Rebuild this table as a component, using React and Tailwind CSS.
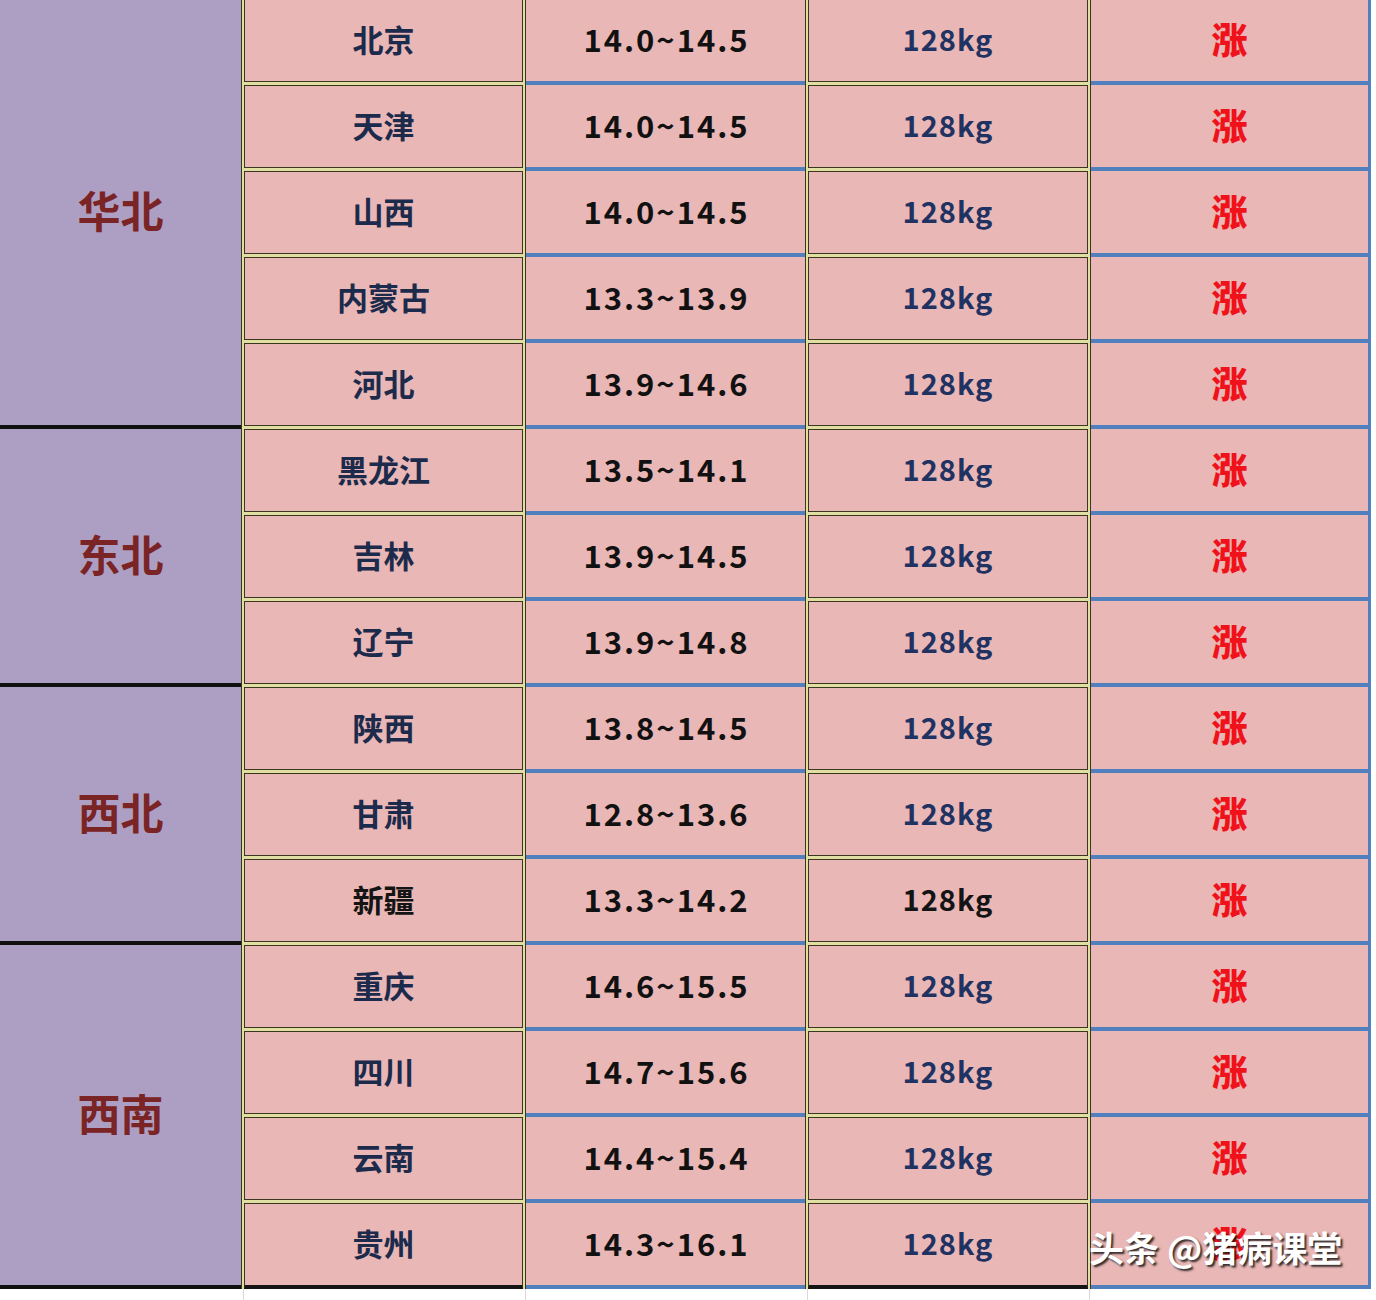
const regions = [
  { name: "华北", h: "h-[430px]" },
  { name: "东北", h: "h-[258px]" },
  { name: "西北", h: "h-[258px]" },
  { name: "西南", h: "h-[344px]" },
];

const rows = [
  ["北京", "14.0~14.5"],
  ["天津", "14.0~14.5"],
  ["山西", "14.0~14.5"],
  ["内蒙古", "13.3~13.9"],
  ["河北", "13.9~14.6"],
  ["黑龙江", "13.5~14.1"],
  ["吉林", "13.9~14.5"],
  ["辽宁", "13.9~14.8"],
  ["陕西", "13.8~14.5"],
  ["甘肃", "12.8~13.6"],
  ["新疆", "13.3~14.2"],
  ["重庆", "14.6~15.5"],
  ["四川", "14.7~15.6"],
  ["云南", "14.4~15.4"],
  ["贵州", "14.3~16.1"],
];

const Framed = ({ last, children, className }) => (
  <div
    className={`shrink-0 border-x border-[#3b3620] bg-[#e0dea0] px-[2px] ${
      last ? "pb-0" : "pb-[3px]"
    } ${className}`}
  >
    <div
      className={`flex h-full items-center justify-center border border-[#3b3620] bg-[#e8b7b6] ${
        last ? "border-b-[4px] border-b-[#151515]" : ""
      }`}
    >
      {children}
    </div>
  </div>
);

const Row = ({ name, price, last }) => (
  <div className="flex h-[86px]">
    <Framed last={last} className="w-[285px]">
      <span
        className={`mb-[5px] text-[31px] font-bold leading-none ${
          name === "新疆" ? "text-[#141414]" : "text-[#1c2a4b]"
        }`}
      >
        {name}
      </span>
    </Framed>
    <div className="flex w-[279px] shrink-0 items-center justify-center border-b-4 border-[#5080be] bg-[#e8b7b6]">
      <span className="mb-[4px] pl-[2px] text-[31px] font-bold leading-none tracking-[2px] text-[#111]">
        {price}
      </span>
    </div>
    <Framed last={last} className="w-[286px]">
      <span
        className={`mb-[4px] text-[29px] font-bold leading-none tracking-[1px] ${
          name === "新疆" ? "text-[#141414]" : "text-[#1f3262]"
        }`}
      >
        128kg
      </span>
    </Framed>
    <div className="flex w-[280px] shrink-0 items-center justify-center border-r-[3px] border-b-4 border-[#5080be] bg-[#e8b7b6]">
      <span className="mb-[5px] text-[36px] font-black leading-none text-[#f0121a]">
        涨
      </span>
    </div>
  </div>
);

export default function App() {
  return (
    <div className="relative h-[1300px] w-[1376px] overflow-hidden bg-white font-['Noto_Sans_CJK_SC','Noto_Sans',sans-serif]">
      <div className="-mt-[1px] flex">
        {/* region column */}
        <div className="flex w-[241px] shrink-0 flex-col">
          {regions.map((r) => (
            <div
              key={r.name}
              className={`${r.h} flex items-center justify-center border-b-4 border-[#101010] bg-[#ad9fc3]`}
            >
              <span className="mb-[6px] text-[43px] font-bold leading-none text-[#7b2425]">
                {r.name}
              </span>
            </div>
          ))}
        </div>

        <div className="flex flex-col">
          {rows.map(([name, price], i) => (
            <Row
              key={name}
              name={name}
              price={price}
              last={i === rows.length - 1}
            />
          ))}
        </div>
      </div>

      {/* faint sheet grid below the table */}
      <div className="flex h-[20px]">
        <div className="w-[243px] shrink-0" />
        <div className="w-[282px] shrink-0 border-l border-[#d9d9d9]" />
        <div className="w-[282px] shrink-0 border-l border-[#d9d9d9]" />
        <div className="w-[282px] shrink-0 border-l border-[#d9d9d9]" />
        <div className="w-[282px] shrink-0 border-l border-[#d9d9d9]" />
      </div>

      {/* watermark */}
      <div className="absolute left-[1089px] top-[1229px] text-[35px] font-bold leading-none text-white [text-shadow:2px_2px_2px_rgba(20,20,20,0.85)]">
        头条 @猪病课堂
      </div>
    </div>
  );
}
